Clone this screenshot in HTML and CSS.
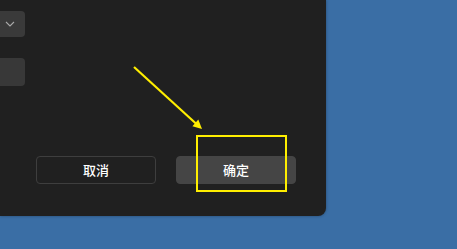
FILE: index.html
```html
<!DOCTYPE html>
<html lang="zh-CN">
<head>
<meta charset="utf-8">
<title>Dialog</title>
<link rel="stylesheet" href="styles.css">
</head>
<body>
<div class="dialog">
  <div class="fields">
    <div class="field select">
      <svg class="chevron" width="10" height="6" viewBox="0 0 10 6"><path d="M1 1 L5 5 L9 1" fill="none" stroke="#a8a8a8" stroke-width="1.1"/></svg>
    </div>
    <div class="field input"></div>
  </div>
  <div class="actions">
    <button class="btn btn-cancel">取消</button>
    <button class="btn btn-ok">确定</button>
  </div>
</div>
<svg class="annotation" width="457" height="249" viewBox="0 0 457 249">
  <line x1="134" y1="67" x2="197" y2="124.5" stroke="#ffee00" stroke-width="2.2"/>
  <polygon points="202,129 192.4,126.2 198.3,119.6" fill="#ffee00"/>
  <rect x="197" y="136" width="89" height="55" fill="none" stroke="#ffee00" stroke-width="2"/>
</svg>
</body>
</html>
```
FILE: styles.css
```css
html, body {
  margin: 0;
  padding: 0;
}
body {
  width: 457px;
  height: 249px;
  background: #3a6ea5;
  overflow: hidden;
  position: relative;
  font-family: "Noto Sans CJK SC", "Noto Sans", sans-serif;
}
.dialog {
  width: 326px;
  height: 216px;
  background: #202020;
  border-bottom-right-radius: 8px;
  box-shadow: 0 0 3px rgba(0, 0, 0, 0.35);
  display: flex;
  flex-direction: column;
  overflow: hidden;
}
.fields {
  display: flex;
  flex-direction: column;
  gap: 21px;
  padding-top: 11px;
  margin-left: -40px;
  width: 65px;
}
.field {
  border-radius: 4px;
  background: #383838;
  box-sizing: border-box;
}
.select {
  height: 26px;
  background: #3a3a3a;
  display: flex;
  align-items: center;
  justify-content: flex-end;
  padding-right: 10px;
}
.chevron {
  display: block;
}
.input {
  height: 28px;
}
.actions {
  margin-top: auto;
  padding: 0 0 32px 36px;
  display: flex;
  gap: 20px;
}
.btn {
  width: 120px;
  height: 28px;
  box-sizing: border-box;
  border-radius: 4px;
  font-family: "Noto Sans CJK SC", "Noto Sans", sans-serif;
  font-size: 13px;
  font-weight: 500;
  line-height: 1;
  color: #ffffff;
  padding: 0 0 2px 0;
  display: flex;
  align-items: center;
  justify-content: center;
}
.btn-cancel {
  background: #202020;
  border: 1px solid #3e3e3e;
}
.btn-ok {
  background: #454545;
  border: 1px solid #454545;
}
.annotation {
  position: absolute;
  left: 0;
  top: 0;
}
```
